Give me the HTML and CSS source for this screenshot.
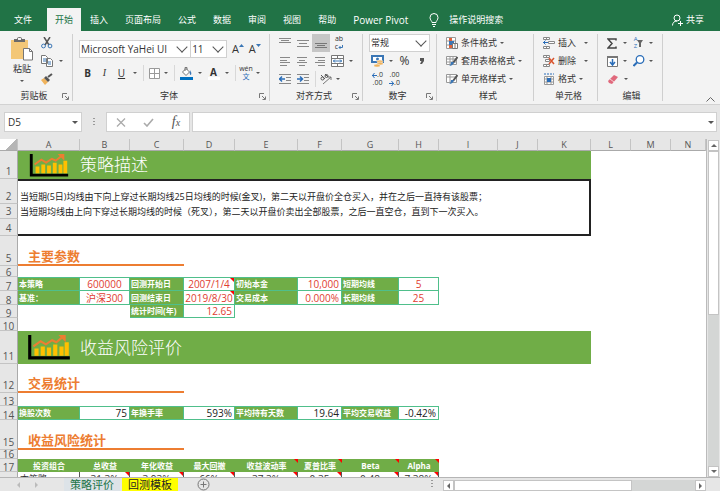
FILE: index.html
```html
<!DOCTYPE html>
<html lang="zh-CN">
<head>
  <meta charset="UTF-8" />
  <meta name="viewport" content="width=device-width, initial-scale=1.0" />
  <title>策略评价</title>
  <link rel="stylesheet" href="styles.css">
</head>
<body>
  <svg class="defs" aria-hidden="true">
    <symbol id="launcher" viewBox="0 0 7 7"><path d="M.5 5V.5H5M3 3l3 3M6.500 3.500v3h-3" fill="none" stroke="#777"/></symbol>
    <symbol id="chart" viewBox="0 0 40 24">
      <path d="M1.500 0v22H40" fill="none" stroke="#000" stroke-width="3"/>
      <path d="M6 13h4v7H6zM12 11h4v9h-4zM18 12h4v8h-4zM24 9h4v11h-4zM30 11h4v9h-4zM35 7h4v13h-4z" fill="#ffc000"/>
      <path d="M5 11l7-5 5 3 6-4 4 2 6-5" fill="none" stroke="#ed7d31" stroke-width="2"/>
      <path d="M29 0h7v7z" fill="#ed7d31"/>
    </symbol>
  </svg>

  <nav class="menu">
    <button class="file">文件</button>
    <button class="active">开始</button>
    <button>插入</button>
    <button>页面布局</button>
    <button>公式</button>
    <button>数据</button>
    <button>审阅</button>
    <button>视图</button>
    <button>帮助</button>
    <button class="latin">Power Pivot</button>
    <button class="tell">
      <svg width="10" height="14" viewBox="0 0 10 14"><path d="M3 9.500C3 8 1 7 1 4.500a4 4 0 0 1 8 0C9 7 7 8 7 9.500zM3 11.500h4M4 13.500h2" fill="none" stroke="#fff"/></svg>
      操作说明搜索
    </button>
    <button class="share">
      <svg width="11" height="12" viewBox="0 0 11 12"><circle cx="5" cy="4" r="3" fill="none" stroke="#fff"/><path d="M.5 11.500C.5 9 2 7 5 7M6 9.500h5M8.500 7v5" fill="none" stroke="#fff"/></svg>
      共享
    </button>
  </nav>

  <div class="ribbon">
    <section class="group clipboard">
      <div class="body">
        <button class="paste">
          <svg width="24" height="24" viewBox="0 0 24 24"><path d="M1 3h17v19H1z" fill="#f3c777"/><path d="M4 5V2h3a2.500 2 0 0 1 5 0h3v3z" fill="#6b6b6b"/><path d="M8 1h3v2H8z" fill="#f3f3f3"/><path d="M13.500 11.500h6l3 3v8.500h-9z" fill="#fff" stroke="#777"/><path d="M19.500 11.500v3h3" fill="none" stroke="#777"/></svg>
          <span>粘贴</span>
          <i class="caret"></i>
        </button>
        <div class="rows">
          <div class="row"><button class="tool" aria-label="剪切"><svg width="12" height="12" viewBox="0 0 12 12"><path d="M3 0l5 8M9 0L4 8" stroke="#555" stroke-width="1.500"/><g fill="none" stroke="#3a76b5"><circle cx="2.500" cy="9" r="1.900"/><circle cx="9" cy="9" r="1.900"/></g></svg></button></div>
          <div class="row"><button class="tool" aria-label="复制"><svg width="12" height="12" viewBox="0 0 12 12"><path d="M.5.5h4l2 2v6h-6zM5.500 3.500h4l2 2v6h-6z" fill="#fff" stroke="#777"/><path d="M2 4h3M2 6h3M7 7h3M7 9h3" stroke="#3a76b5"/></svg></button><i class="caret"></i></div>
          <div class="row"><button class="tool" aria-label="格式刷"><svg width="12" height="12" viewBox="0 0 12 12"><path d="M0 7l3-2 4 4-3 3z" fill="#f0b35c"/><path d="M3 5l2-2 4 4-2 2z" fill="#555"/><path d="M7 4l4-3" stroke="#555" stroke-width="2"/></svg></button></div>
        </div>
      </div>
      <footer><span>剪贴板</span><svg width="7" height="7"><use href="#launcher"/></svg></footer>
    </section>

    <section class="group font">
      <div class="body two">
        <div class="row">
          <label class="combo family"><select aria-label="字体"><option>Microsoft YaHei UI</option></select></label>
          <label class="combo size"><select aria-label="字号"><option>11</option></select></label>
          <button class="tool grow" aria-label="增大字号">A<svg width="5" height="3" viewBox="0 0 5 3"><path d="M0 3l2.500-3L5 3z" fill="#3a76b5"/></svg></button>
          <button class="tool" aria-label="减小字号">A<svg width="5" height="3" viewBox="0 0 5 3"><path d="M0 0l2.500 3L5 0z" fill="#3a76b5"/></svg></button>
        </div>
        <div class="row">
          <button class="tool"><b>B</b></button>
          <button class="tool serif"><em>I</em></button>
          <button class="tool"><u>U</u></button><i class="caret"></i>
          <span class="sep"></span>
          <button class="tool slim" aria-label="边框"><svg width="11" height="11" viewBox="0 0 11 11"><path d="M.5.5h10v10H.5zM5.500.5v10M.5 5.500h10" fill="#fff" stroke="#999"/></svg></button><i class="caret"></i>
          <span class="sep"></span>
          <button class="tool" aria-label="填充颜色"><svg width="13" height="13" viewBox="0 0 13 13"><path d="M2.500 5L6 1.500 9.500 5 6 8.500z" fill="#fff" stroke="#777"/><path d="M5 4V.5h2V3" fill="none" stroke="#777"/><path d="M10 3q2 3 1 5-2 0-1-5" fill="#3a76b5"/><path d="M0 10h13v3H0z" fill="#0070c0"/></svg></button><i class="caret"></i>
          <button class="tool color" aria-label="字体颜色"><b>A</b></button><i class="caret"></i>
          <span class="sep"></span>
          <button class="tool slim pinyin" aria-label="拼音"><span>wén</span><span>文</span></button><i class="caret"></i>
        </div>
      </div>
      <footer><span>字体</span><svg width="7" height="7"><use href="#launcher"/></svg></footer>
    </section>

    <section class="group align">
      <div class="body rows">
        <div class="row">
          <button class="tool" aria-label="顶端对齐"><svg width="12" height="12" viewBox="0 0 12 12"><path d="M0 1.500h12M2 3.500h8M0 5.500h12" stroke="#888"/></svg></button>
          <button class="tool" aria-label="垂直居中"><svg width="12" height="12" viewBox="0 0 12 12"><path d="M0 3.500h12M2 6.500h8M0 9.500h12" stroke="#888"/></svg></button>
          <button class="tool on" aria-label="底端对齐"><svg width="12" height="12" viewBox="0 0 12 12"><path d="M0 6.500h12M2 8.500h8M0 10.500h12" stroke="#777"/></svg></button>
          <button class="tool wrap" aria-label="自动换行"><span>ab</span><span>c<svg width="5" height="5" viewBox="0 0 5 5"><path d="M4.500 0v2.500H1M2.500 1L1 2.500 2.500 4" fill="none" stroke="#3a76b5"/></svg></span></button>
        </div>
        <div class="row">
          <button class="tool" aria-label="左对齐"><svg width="10" height="9" viewBox="0 0 10 9"><path d="M0 .5h10M0 3.500h7M0 5.500h10M0 8.500h7" stroke="#888"/></svg></button>
          <button class="tool" aria-label="居中"><svg width="10" height="9" viewBox="0 0 10 9"><path d="M0 .5h10M2 3.500h6M0 5.500h10M2 8.500h6" stroke="#888"/></svg></button>
          <button class="tool" aria-label="右对齐"><svg width="10" height="9" viewBox="0 0 10 9"><path d="M0 .5h10M3 3.500h7M0 5.500h10M3 8.500h7" stroke="#888"/></svg></button>
          <button class="tool" aria-label="合并后居中"><svg width="13" height="12" viewBox="0 0 13 12"><path d="M.5.5h12v11H.5zM.5 3.500h12M.5 8.500h12M6.500.5v3M6.500 8.500v3" fill="#fff" stroke="#777"/><path d="M2 6h9M4 4.500L2.500 6 4 7.500M9 4.500L10.500 6 9 7.500" fill="none" stroke="#3a76b5"/></svg></button><i class="caret"></i>
        </div>
        <div class="row">
          <button class="tool" aria-label="减少缩进"><svg width="12" height="11" viewBox="0 0 12 11"><path d="M0 .5h12M7 3.500h5M7 6.500h5M0 9.500h12" stroke="#888"/><path d="M0 5h6M3 2.500L.5 5 3 7.500" fill="none" stroke="#2a6db8" stroke-width="1.500"/></svg></button>
          <button class="tool" aria-label="增加缩进"><svg width="12" height="11" viewBox="0 0 12 11"><path d="M0 .5h12M7 3.500h5M7 6.500h5M0 9.500h12" stroke="#888"/><path d="M0 5h6M3 2.500L5.500 5 3 7.500" fill="none" stroke="#2a6db8" stroke-width="1.500"/></svg></button>
          <span class="sep"></span>
          <button class="tool slim" aria-label="方向"><svg width="12" height="12" viewBox="0 0 12 12"><path d="M3 11l8-7M8 4h3v3" fill="none" stroke="#777"/><circle cx="2.500" cy="5.500" r="1.500" fill="none" stroke="#555"/><path d="M1 2l4 4M5 1l3 3" stroke="#555"/><circle cx="6.500" cy="3" r="1.500" fill="none" stroke="#555"/></svg></button><i class="caret"></i>
        </div>
      </div>
      <footer><span>对齐方式</span><svg width="7" height="7"><use href="#launcher"/></svg></footer>
    </section>

    <section class="group number">
      <div class="body rows">
        <div class="row"><label class="combo format"><select aria-label="数字格式"><option>常规</option></select></label></div>
        <div class="row">
          <button class="tool" aria-label="会计数字格式"><svg width="13" height="12" viewBox="0 0 13 12"><path d="M1 1h11v6H1z" fill="#fff" stroke="#3a76b5" stroke-width="2"/><circle cx="6.500" cy="4" r="1.500" fill="#3a76b5"/><g fill="#f0b35c" stroke="#f3f3f3" stroke-width=".5"><ellipse cx="9" cy="6.500" rx="3" ry="1.500"/><ellipse cx="9" cy="8.500" rx="3" ry="1.500"/><ellipse cx="6" cy="10.500" rx="3" ry="1.500"/></g></svg></button><i class="caret"></i>
          <button class="tool big">%</button>
          <button class="tool big" aria-label="千位分隔样式"><svg width="4" height="6" viewBox="0 0 4 6"><path d="M0 0h4v3L2 6H0l1.500-3H0z" fill="#555"/></svg></button>
        </div>
        <div class="row">
          <button class="tool decimals" aria-label="增加小数位数"><span><svg width="5" height="5" viewBox="0 0 5 5"><path d="M0 2.500h5M2.500 0L.5 2.500l2 2.500" fill="none" stroke="#2a6db8"/></svg>.0</span><span>.00</span></button>
          <button class="tool decimals" aria-label="减少小数位数"><span>.00</span><span><svg width="5" height="5" viewBox="0 0 5 5"><path d="M0 2.500h5M2.500 0l2 2.500-2 2.500" fill="none" stroke="#2a6db8"/></svg>.0</span></button>
        </div>
      </div>
      <footer><span>数字</span><svg width="7" height="7"><use href="#launcher"/></svg></footer>
    </section>

    <section class="group styles">
      <div class="body rows">
        <button class="row wide"><svg width="12" height="12" viewBox="0 0 12 12"><path d="M.5.5h9v11h-9zM.5 4h9M.5 8h9M3.500.5v11" fill="#fff" stroke="#999"/><path d="M3 1h3v3H3zM3 8h3v3H3z" fill="#e0633a"/><path d="M3 4h5v4H3z" fill="#3a76b5"/><path d="M6.500 6.500h5v5h-5zM8 8h2M8 10h2" fill="#fff" stroke="#777"/></svg>条件格式<i class="caret"></i></button>
        <button class="row wide"><svg width="12" height="12" viewBox="0 0 12 12"><path d="M.5 1.500h10v8H.5zM.5 4h10M.5 7h10M4 1.500v8M7 1.500v8" fill="#fff" stroke="#999"/><path d="M11.500 2L7 8" stroke="#555" stroke-width="2"/><path d="M8 7q-1 4-5 4 2-1 2-4z" fill="#3a76b5"/></svg>套用表格格式<i class="caret"></i></button>
        <button class="row wide"><svg width="12" height="12" viewBox="0 0 12 12"><path d="M.5 1.500h10v8H.5zM.5 4h10M4 1.500v8" fill="#fff" stroke="#999"/><path d="M11.500 2L7 8" stroke="#555" stroke-width="2"/><path d="M8 7q-1 4-5 4 2-1 2-4z" fill="#3a76b5"/></svg>单元格样式<i class="caret"></i></button>
      </div>
      <footer><span>样式</span></footer>
    </section>

    <section class="group cells">
      <div class="body rows">
        <button class="row wide"><svg width="12" height="12" viewBox="0 0 12 12"><path d="M.5.5h6v2h-6zM.5 9.500h6v2h-6zM3.500.5v2M3.500 9.500v2M5.500 4.500h6v2h-6z" fill="#fff" stroke="#888"/><path d="M0 5.500h5M2.500 3.500l-2 2 2 2" fill="none" stroke="#2a6db8"/></svg>插入<i class="caret far"></i></button>
        <button class="row wide"><svg width="12" height="12" viewBox="0 0 12 12"><path d="M.5.5h6v2h-6zM.5 9.500h6v2h-6zM3.500.5v2M3.500 9.500v2M2.500 4.500h4v2h-4z" fill="#fff" stroke="#888"/><path d="M6 3l5 6M11 3L6 9" stroke="#d9532c" stroke-width="1.500"/></svg>删除<i class="caret far"></i></button>
        <button class="row wide"><svg width="12" height="12" viewBox="0 0 12 12"><path d="M1.500 3.500h9v8h-9zM1.500 6h9M1.500 9h9M4 3.500v8M8 3.500v8" fill="#fff" stroke="#999"/><path d="M4 5h4v4H4z" fill="#2a6db8"/><path d="M1 1h10" stroke="#2a6db8" stroke-dasharray="2 1"/></svg>格式<i class="caret"></i></button>
      </div>
      <footer><span>单元格</span></footer>
    </section>

    <section class="group edit">
      <div class="body rows">
        <div class="row">
          <button class="tool" aria-label="自动求和"><svg width="10" height="11" viewBox="0 0 10 11"><path d="M9 2.500V1H1l4 4.500L1 10h8V8.500" fill="none" stroke="#444" stroke-width="1.500"/></svg></button><i class="caret"></i>
          <button class="tool sort" aria-label="排序和筛选"><span><span>A</span><span>Z</span></span><svg width="6" height="7" viewBox="0 0 6 7"><path d="M0 0h6L4 3v4H2V3z" fill="#666"/></svg></button><i class="caret"></i>
        </div>
        <div class="row">
          <button class="tool" aria-label="填充"><svg width="11" height="11" viewBox="0 0 11 11"><path d="M.5.500h10v10H.5z" fill="#fff" stroke="#777"/><path d="M0 1h11" stroke="#777" stroke-width="2"/><path d="M5.500 3v6M3 6l2.500 3L8 6" fill="none" stroke="#2a6db8" stroke-width="1.500"/></svg></button><i class="caret"></i>
          <button class="tool" aria-label="查找和选择"><svg width="12" height="12" viewBox="0 0 12 12"><circle cx="7" cy="4.500" r="3.800" fill="#fff" stroke="#2a6db8" stroke-width="1.300"/><path d="M4 7.500L.5 11" stroke="#2a6db8" stroke-width="2"/></svg></button><i class="caret"></i>
        </div>
        <div class="row">
          <button class="tool" aria-label="清除"><svg width="10" height="9" viewBox="0 0 10 9"><path d="M0 6l6-6 4 2-6 7-3-1z" fill="#e0697c"/><path d="M2 4l4 3" stroke="#f7d0d6"/></svg></button><i class="caret"></i>
        </div>
      </div>
      <footer><span>编辑</span></footer>
    </section>
    <button class="collapse" aria-label="折叠功能区"><svg width="9" height="5" viewBox="0 0 9 5"><path d="M.5 4.500l4-4 4 4" fill="none" stroke="#666"/></svg></button>
  </div>

  <div class="formula">
    <label class="namebox"><input type="text" value="D5" aria-label="名称框"><i class="caret"></i></label>
    <i class="dots"></i>
    <div class="checks">
      <button aria-label="取消"><svg width="10" height="9" viewBox="0 0 10 9"><path d="M1 .5l8 8M9 .5l-8 8" stroke="#aaa" stroke-width="1.300"/></svg></button>
      <button aria-label="输入"><svg width="11" height="9" viewBox="0 0 11 9"><path d="M1 5l3 3 6-7" fill="none" stroke="#aaa" stroke-width="1.600"/></svg></button>
      <button class="fx"><em>f<small>x</small></em></button>
    </div>
    <label class="entry"><input type="text" aria-label="编辑栏"><i class="caret"></i></label>
  </div>

  <main>
    <div class="sheet">
      <table>
        <colgroup>
          <col class="w-head"><col class="w-a"><col class="w-b"><col class="w-c"><col class="w-d"><col class="w-e"><col class="w-f"><col class="w-g"><col class="w-m"><col class="w-i"><col class="w-m"><col class="w-k"><col class="w-m"><col class="w-m"><col>
        </colgroup>
        <thead>
          <tr><th class="corner"></th><th>A</th><th>B</th><th>C</th><th>D</th><th>E</th><th>F</th><th>G</th><th>H</th><th>I</th><th>J</th><th>K</th><th>L</th><th>M</th><th>N</th></tr>
        </thead>
        <tbody>
          <tr class="h28 tall"><th>1</th><td colspan="11" class="banner"><div><svg width="38" height="23"><use href="#chart"/></svg>策略描述</div></td></tr>
          <tr class="h25 tall"><th>2</th><td colspan="11" rowspan="3" class="desc">当短期(5日)均线由下向上穿过长期均线25日均线的时候(金叉)，第二天以开盘价全仓买入，并在之后一直持有该股票；<br>当短期均线由上向下穿过长期均线的时候（死叉），第二天以开盘价卖出全部股票，之后一直空仓，直到下一次买入。</td></tr>
          <tr class="h15 tall"><th>3</th></tr>
          <tr class="h17 tall"><th>4</th></tr>
          <tr class="h30 tall"><th>5</th><td colspan="3" class="section">主要参数</td></tr>
          <tr class="h11"><th>6</th></tr>
          <tr class="h14 first"><th>7</th><td class="label">本策略</td><td class="val">600000</td><td class="label">回测开始日</td><td class="val note">2007/1/4</td><td class="label">初始本金</td><td class="val right">10,000</td><td class="label">短期均线</td><td class="val">5</td></tr>
          <tr class="h14"><th>8</th><td class="label">基准：</td><td class="val">沪深300</td><td class="label">回测结束日</td><td class="val note">2019/8/30</td><td class="label">交易成本</td><td class="val right">0.000%</td><td class="label">长期均线</td><td class="val">25</td></tr>
          <tr class="h13"><th>9</th><td></td><td></td><td class="label">统计时间(年)</td><td class="val right">12.65</td></tr>
          <tr class="h13"><th>10</th></tr>
          <tr class="h33 tall"><th>11</th><td colspan="11" class="banner"><div><svg width="42" height="25"><use href="#chart"/></svg>收益风险评价</div></td></tr>
          <tr class="h29 tall"><th>12</th><td colspan="3" class="section">交易统计</td></tr>
          <tr class="h13"><th>13</th></tr>
          <tr class="h14 first stats"><th>14</th><td class="label">换股次数</td><td class="val right">75</td><td class="label">年换手率</td><td class="val right">593%</td><td class="label">平均持有天数</td><td class="val right">19.64</td><td class="label">平均交易收益</td><td class="val right">-0.42%</td></tr>
          <tr class="h30 tall"><th>15</th><td colspan="3" class="section">收益风险统计</td></tr>
          <tr class="h9"><th>16</th></tr>
          <tr class="h13 heads"><th>17</th><td>投资组合</td><td>总收益</td><td>年化收益</td><td>最大回撤</td><td class="note">收益波动率</td><td class="note">夏普比率</td><td class="note">Beta</td><td class="note">Alpha</td></tr>
          <tr class="h14 result"><th></th><td>本策略</td><td class="note">31.3%</td><td class="note">3.93%</td><td class="note">66%</td><td class="note">37.3%</td><td class="note">0.35</td><td class="note">0.48</td><td class="note">7.38%</td></tr>
        </tbody>
      </table>
    </div>
    <div class="vscroll">
      <button aria-label="向上滚动"><i class="arrow up"></i></button>
      <div class="track"><div class="thumb"></div></div>
      <button aria-label="向下滚动"><i class="arrow down"></i></button>
    </div>
  </main>

  <div class="tabs">
    <div class="nav"><i class="arrow left"></i><i class="arrow rightward"></i></div>
    <button class="tab current">策略评价</button>
    <button class="tab yellow">回测模板</button>
    <button class="add" aria-label="新工作表"><svg width="13" height="13" viewBox="0 0 13 13"><path d="M6.500 3.500v6M3.500 6.500h6" stroke="#777"/><circle cx="6.500" cy="6.500" r="5.500" fill="none" stroke="#777"/></svg></button>
    <i class="dots"></i>
    <div class="hscroll">
      <button aria-label="向左滚动"><i class="arrow left"></i></button>
      <div class="track"><div class="thumb"></div></div>
      <button aria-label="向右滚动"><i class="arrow rightward"></i></button>
    </div>
  </div>
</body>
</html>
```
FILE: styles.css
```css
* {
  box-sizing: border-box;
}
body {
  margin: 0;
  height: 100vh;
  display: flex;
  flex-direction: column;
  overflow: hidden;
  background: #e6e6e6;
  color: #333;
  font-family: "Open Sans", "Noto Sans CJK SC", sans-serif;
  font-size: 9px;
  line-height: 12px;
}
button, input, select {
  margin: 0;
  padding: 0;
  border: 0;
  border-radius: 0;
  background: none;
  color: inherit;
  font: inherit;
}
button {
  cursor: pointer;
}
svg {
  flex: none;
  display: block;
}
.defs {
  position: absolute;
  width: 0;
  height: 0;
}

/* menu */
.menu {
  display: flex;
  align-items: flex-end;
  gap: 1px;
  height: 31px;
  padding: 0 16px 0 6px;
  background: #217346;
  color: #fff;
  flex: none;
}
.menu button {
  height: 23px;
  padding: 0 8px;
  white-space: nowrap;
}
.menu .file {
  margin-right: 6px;
}
.menu .active {
  background: #f3f3f3;
  color: #217346;
}
.menu .latin {
  font-size: 10px;
}
.menu .tell,
.menu .share {
  display: flex;
  align-items: center;
  gap: 10px;
}
.menu .tell {
  padding-left: 12px;
}
.menu .share {
  gap: 3px;
  padding: 0;
  margin-left: auto;
}

/* ribbon */
.ribbon {
  display: flex;
  flex: none;
  height: 74px;
  padding: 3px 0 0;
  background: #f3f3f3;
  border-bottom: 1px solid #d2d2d2;
}
.group {
  display: flex;
  flex-direction: column;
  flex: none;
  padding: 0 6px;
  margin-bottom: 3px;
  border-right: 1px solid #cfcfcf;
}
.group .body {
  height: 54px;
}
.group footer {
  display: flex;
  align-items: center;
  height: 16px;
  padding-top: 2px;
  margin-right: -3px;
}
.group footer span {
  flex: 1;
  text-align: center;
}
.clipboard { width: 73px; }
.font { width: 197px; }
.align { width: 93px; }
.number { width: 74px; }
.styles { width: 97px; }
.cells { width: 64px; }
.edit { width: 65px; }
.styles, .cells {
  padding-left: 9px;
}
.rows, .two {
  display: flex;
  flex-direction: column;
}
.two {
  padding: 3px 0;
}
.row {
  display: flex;
  align-items: center;
  height: 18px;
}
.two .row {
  height: 24px;
}
.wide svg {
  margin-right: 3px;
}
.tool {
  display: flex;
  align-items: center;
  justify-content: center;
  width: 17px;
  height: 18px;
  font-size: 10px;
}
.align .tool {
  width: 18px;
}
.align .slim,
.tool.slim {
  width: 14px;
}
.tool.on {
  background: #c6c6c6;
}
.tool.big {
  font-size: 12px;
}
.grow, .grow + .tool {
  font-size: 11px;
}
.grow svg, .grow + .tool svg {
  margin-bottom: 8px;
}
.grow {
  margin-left: 3px;
}
.serif {
  font-family: "Liberation Serif", serif;
}
.color b {
  border-bottom: 3px solid #fff;
  width: 12px;
  line-height: 10px;
}
.pinyin, .wrap, .decimals {
  flex-direction: column;
  font-size: 7px;
  line-height: 8px;
}
.pinyin span + span {
  color: #2a6db8;
}
.wrap span, .decimals span {
  display: flex;
  align-items: center;
  height: 8px;
}
.sort {
  font-size: 6px;
  line-height: 7px;
  color: #2a6db8;
}
.sort span span {
  display: block;
}
.sep {
  width: 1px;
  height: 16px;
  margin: 0 3px;
  background: #d8d8d8;
}
.caret {
  display: flex;
  justify-content: center;
  width: 10px;
}
.caret::after {
  content: "";
  border: 2px solid transparent;
  border-top-color: #555;
  border-bottom: 0;
}
.caret.far {
  margin-left: 5px;
}
.clipboard .body {
  display: flex;
  gap: 3px;
}
.paste {
  display: flex;
  flex-direction: column;
  align-items: center;
  width: 34px;
  padding-top: 3px;
}
.paste span {
  margin: 2px 0;
}
.paste .caret {
  margin-top: 3px;
}
.clipboard .tool {
  width: 12px;
}
.clipboard .rows .caret {
  margin-left: 3px;
}
.combo {
  position: relative;
  height: 18px;
  border: 1px solid #d0d0d0;
  background: #fff;
  font-size: 10px;
}
.combo select {
  display: block;
  width: 100%;
  height: 16px;
  padding-left: 1px;
  appearance: none;
}
.combo::after {
  content: "";
  position: absolute;
  top: 2px;
  right: 4px;
  width: 7px;
  height: 7px;
  border: solid #555;
  border-width: 0 1px 1px 0;
  transform: rotate(45deg);
  pointer-events: none;
}
.family { width: 114px; }
.size { width: 36px; border-left: 0; }
.format { width: 61px; font-size: 9px; }
.edit .caret + .tool {
  margin-left: 1px;
}
.collapse {
  margin: auto 5px 2px auto;
}

/* formula bar */
.formula {
  display: flex;
  align-items: center;
  flex: none;
  height: 34px;
  padding: 0 3px 0 4px;
}
.namebox, .entry, .checks {
  display: flex;
  align-items: center;
  height: 20px;
  background: #fff;
  border: 1px solid #d0d0d0;
}
.namebox {
  width: 78px;
  padding: 0 1px 0 3px;
}
.formula input {
  flex: 1;
  min-width: 0;
  outline: 0;
  font-size: 10px;
}
.dots {
  width: 2px;
  height: 9px;
  background: repeating-linear-gradient(#999 0 1px, transparent 1px 3px);
}
.formula .dots {
  margin: 0 11px;
}
.checks {
  width: 84px;
  justify-content: space-around;
}
.fx {
  color: #555;
  font: 14px "Liberation Serif", serif;
}
.fx small {
  font-size: 10px;
}
.entry {
  flex: 1;
  margin-left: 2px;
}
.formula .caret::after {
  border-width: 3px 3px 0;
}

/* sheet */
main {
  display: flex;
  flex: 1;
  min-height: 0;
}
.sheet {
  flex: 1;
  min-width: 0;
  overflow: hidden;
  background: #fff;
  border-right: 1px solid #bbb;
}
table {
  width: 100%;
  table-layout: fixed;
  border-collapse: separate;
  border-spacing: 0;
}
.w-head { width: 18px; }
.w-a { width: 62px; }
.w-b { width: 50px; }
.w-c { width: 54px; }
.w-d { width: 51px; }
.w-e { width: 63px; }
.w-f { width: 44px; }
.w-g { width: 57px; }
.w-i { width: 59px; }
.w-k { width: 53px; }
.w-m { width: 40px; }
.h9 { height: 9px; }
.h11 { height: 11px; }
.h13 { height: 13px; }
.h14 { height: 14px; }
.h15 { height: 15px; }
.h17 { height: 17px; }
.h25 { height: 25px; }
.h28 { height: 28px; }
.h29 { height: 29px; }
.h30 { height: 30px; }
.h33 { height: 33px; }
th, td {
  padding: 0;
  white-space: nowrap;
  line-height: 10px;
}
th {
  background: #e6e6e6;
  color: #555;
  font-weight: normal;
}
thead th {
  height: 12px;
  border-right: 1px solid #c4c4c4;
  border-bottom: 1px solid #aaa;
}
.corner {
  background: linear-gradient(135deg, transparent 60%, #b5b5b5 60%);
}
tbody th {
  vertical-align: bottom;
  border-right: 1px solid #aaa;
  border-bottom: 1px solid #c4c4c4;
  font-size: 10px;
  line-height: 8px;
}
.tall th {
  padding-bottom: 3px;
}
.banner {
  background: #70ad47;
  color: #fff;
  font-size: 17px;
  font-weight: 300;
  line-height: 24px;
}
.banner div {
  display: flex;
  align-items: center;
  padding-left: 10px;
}
.banner svg {
  width: 42px;
  margin-right: 10px;
}
.desc {
  padding: 8px 0 0 2px;
  border: 2px solid #222;
  border-left: 0;
  vertical-align: top;
  line-height: 15px;
  color: #222;
}
.section {
  padding-left: 10px;
  border-bottom: 2px solid #ed7d31;
  vertical-align: bottom;
  color: #ed7d31;
  font-size: 13px;
  font-weight: bold;
  line-height: 15px;
}
.label, .val {
  border: solid #4fbf8b;
  border-width: 0 1px 1px 0;
}
.first td {
  border-top-width: 1px;
}
.label {
  padding-left: 1px;
  background: #70ad47;
  color: #fff;
  font-size: 8px;
  font-weight: bold;
}
.val {
  text-align: center;
  color: #e03c31;
  font-size: 10px;
}
.val.right {
  padding-right: 2px;
  text-align: right;
}
.stats .val {
  color: #222;
}
.note {
  position: relative;
}
.note::after {
  content: "";
  position: absolute;
  top: 0;
  right: 0;
  border: solid transparent;
  border-width: 0 4px 4px 0;
  border-right-color: #f00;
}
.heads td {
  background: #70ad47;
  color: #fff;
  text-align: center;
  font-size: 8px;
  font-weight: bold;
}
.result td {
  border-right: 1px solid #555;
  text-align: center;
  font-size: 10px;
}
.result th + td {
  padding-left: 2px;
  text-align: left;
  font-size: 9px;
}

/* scrollbars */
.vscroll {
  display: flex;
  flex-direction: column;
  width: 13px;
  padding: 1px 1px 0;
}
.vscroll button, .hscroll button {
  display: flex;
  align-items: center;
  justify-content: center;
  flex: none;
  width: 11px;
  height: 11px;
  background: #fff;
  border: 1px solid #c4c4c4;
}
.track {
  flex: 1;
  background: #d4d6d5;
}
.thumb {
  background: #fff;
  border: 1px solid #c4c4c4;
}
.vscroll .thumb {
  height: 52%;
}
.arrow {
  border: 3px solid transparent;
}
.up { border-top: 0; border-bottom-color: #666; }
.down { border-bottom: 0; border-top-color: #666; }
.left { border-left: 0; border-right-color: #666; }
.rightward { border-right: 0; border-left-color: #666; }

/* sheet tabs */
.tabs {
  display: flex;
  align-items: center;
  flex: none;
  height: 14px;
  padding-right: 14px;
  border-top: 1px solid #b5b5b5;
}
.nav {
  display: flex;
  gap: 15px;
  width: 64px;
  padding-left: 17px;
}
.nav .left { border-right-color: #bbb; }
.nav .rightward { border-left-color: #bbb; }
.tab {
  height: 13px;
  padding: 0 6px;
  font-size: 11px;
  line-height: 13px;
}
.current {
  margin-right: 2px;
  background: #dde3e8;
  color: #217346;
}
.yellow {
  background: #ff0;
  color: #222;
}
.add {
  margin-left: 19px;
}
.tabs .dots {
  margin: 0 10px 0 auto;
}
.hscroll {
  display: flex;
  width: 263px;
  padding-top: 2px;
}
.hscroll .thumb {
  width: 74%;
  height: 100%;
}
```
